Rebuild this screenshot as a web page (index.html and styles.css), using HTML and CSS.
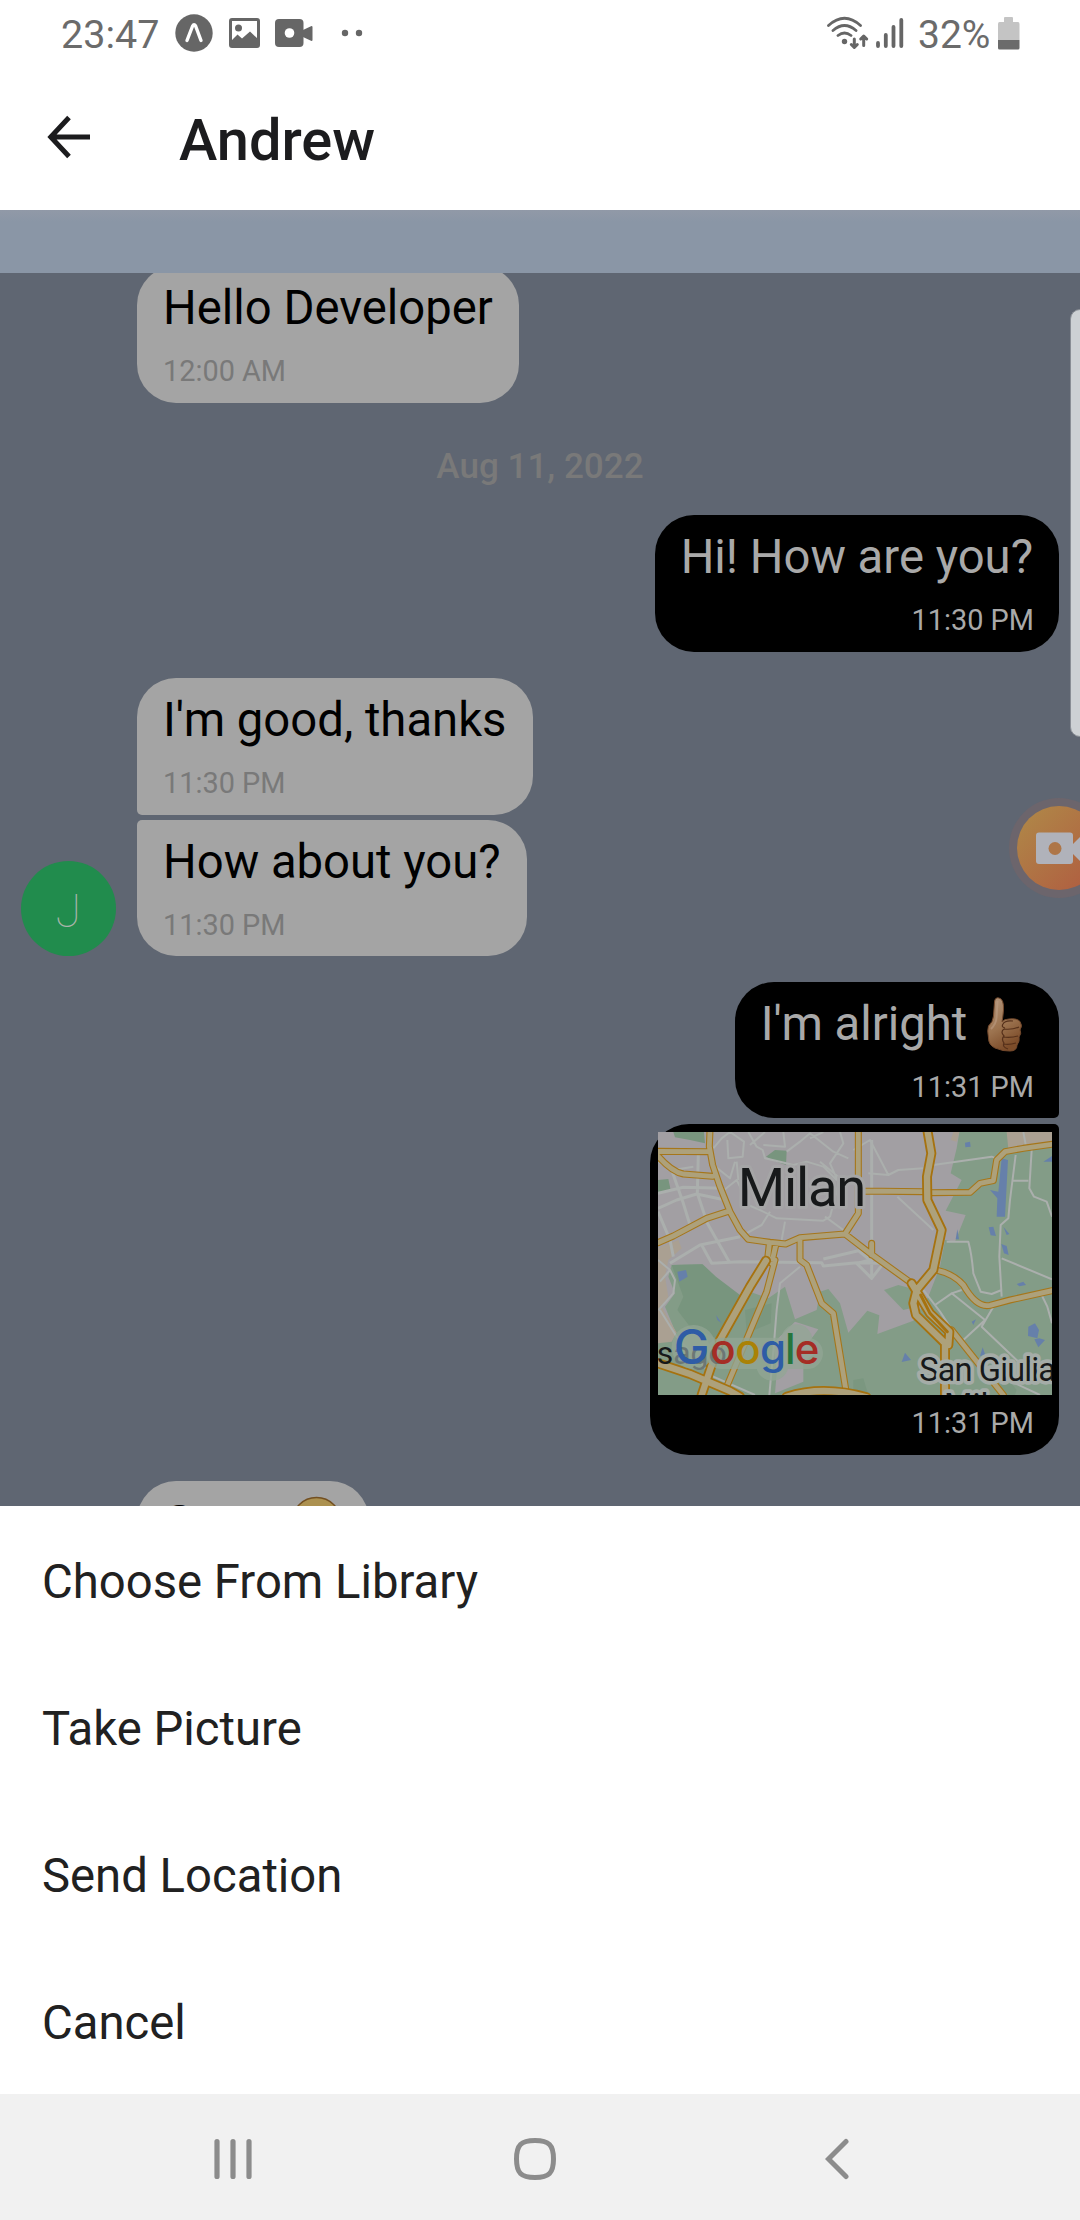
FILE: index.html
```html
<!DOCTYPE html>
<html lang="en">
<head>
<meta charset="utf-8">
<title>Andrew</title>
<link rel="stylesheet" href="styles.css">
</head>
<body>
<div class="screen">
  <div class="status">
    <span class="status-text clock">23:47</span>
    <svg class="ic-app" width="38" height="38" viewBox="0 0 38 38"><circle cx="19" cy="19" r="18.7" fill="#666"/><path d="M12 26.5 17.6 12Q19 9.500 20.600 12L26 26.500" fill="none" stroke="#fff" stroke-width="3.400" stroke-linecap="round" stroke-linejoin="round"/></svg>
    <svg class="ic-photo" width="31" height="30" viewBox="0 0 31 30"><rect x="1.500" y="1.500" width="28" height="27" rx="1.500" fill="none" stroke="#666" stroke-width="3"/><circle cx="9.500" cy="10" r="3.500" fill="#666"/><path d="M2 23 8.500 16.500 13 20.500 21 13.500 29 21V28H2Z" fill="#666"/></svg>
    <svg class="ic-video" width="38" height="28" viewBox="0 0 38 28"><rect width="28.500" height="28" rx="4" fill="#666"/><path d="M28 11 36.500 7Q37.500 7 37.500 8V21Q37.500 22 36.500 22L28 18Z" fill="#666"/><circle cx="14.500" cy="14" r="4.800" fill="#fff"/></svg>
    <svg class="ic-dots" width="22" height="8" viewBox="0 0 22 8"><circle cx="4" cy="4" r="3.200" fill="#666"/><circle cx="18" cy="4" r="3.200" fill="#666"/></svg>
    <svg class="ic-wifi" width="43" height="34" viewBox="0 0 43 34"><g fill="none" stroke="#666" stroke-width="2.800" stroke-linecap="round" stroke-linejoin="round"><path d="M2.500 9.500Q18.500-5 34.500 9.500M7 14.500Q18.500 4.500 30 14.500M12 19.500Q18.500 14.500 25 19.500"/><path d="M28.300 23V31M25.300 28.500 28.300 31.500 31.300 28.500M37.700 29.500V21M34.700 23 37.700 20 40.700 23" stroke-width="3"/></g><circle cx="18.500" cy="25.500" r="2.700" fill="#666"/></svg>
    <svg class="ic-signal" width="28" height="30" viewBox="0 0 28 30"><path d="M2 25V28M9.800 17V28M17.500 9V28M25.300 2V28" stroke="#666" stroke-width="3.800" stroke-linecap="round"/></svg>
    <span class="status-text battery">32%</span>
    <svg class="ic-battery" width="22" height="33" viewBox="0 0 22 33"><path d="M6 1Q6 0 7 0H14Q15 0 15 1V5H20Q21.500 5 21.500 7V23H0V7Q0 5 1.500 5H6Z" fill="#c4c4c4"/><path d="M0 23H21.500V31Q21.500 32.500 20 32.500H1.500Q0 32.500 0 31Z" fill="#6b6b6b"/></svg>
  </div>
  <header class="header">
    <svg width="44" height="44" viewBox="0 0 44 44"><path d="M22 2.500 3.800 22 22 41.500M4 22H43" fill="none" stroke="#1c1c1e" stroke-width="5"/></svg>
    <h1>Andrew</h1>
  </header>
  <div class="band"></div>
  <main class="chat">
    <div class="bubble in hello"><p>Hello Developer</p><time>12:00 AM</time></div>
    <div class="date">Aug 11, 2022</div>
    <div class="bubble out"><p>Hi! How are you?</p><time>11:30 PM</time></div>
    <div class="group">
      <div class="avatar">J</div>
      <div class="stack">
        <div class="bubble in first"><p>I'm good, thanks</p><time>11:30 PM</time></div>
        <div class="bubble in last"><p>How about you?</p><time>11:30 PM</time></div>
      </div>
    </div>
    <div class="bubble out first"><p>I'm alright <svg class="emoji" width="54" height="56" viewBox="0 0 54 56"><defs><linearGradient id="skin" x1="0" y1="0" x2=".4" y2="1"><stop offset="0" stop-color="#b3977e"/><stop offset=".6" stop-color="#9c734f"/><stop offset="1" stop-color="#7d4d2a"/></linearGradient></defs><path d="M20 2Q16 1 15.500 6L14.500 20Q14 26 9.500 30Q8 34 9.500 42Q9.500 49 16 52L24 54.500L31 55Q38 55 38 49Q41 45 40 41Q43 37 41 34Q44 30 41 25.500Q38 22 30 23Q25 23 23 26Q24 20 24.500 14Q25 3 20 2Z" fill="url(#skin)" stroke="#74492c"/><path d="M26 32Q22 31 24 28Q26 24 34 25M25 33Q33 34 40 31M24 41Q32 42 39 40M25 48Q30 49 37 47M25 33Q21 36 25 40Q22 43 25 47Q23 51 29 53" fill="none" stroke="#56301a" stroke-width="1.200"/><path d="M18.500 5 17.500 22Q17 28 12 33" fill="none" stroke="#bd9d84" stroke-width="2" opacity=".6"/></svg></p><time>11:31 PM</time></div>
    <div class="bubble out map-bubble">
      <svg class="map" width="394" height="263" viewBox="54 66 1182 789">
        <rect x="54" y="66" width="1182" height="789" fill="#a29fa3"/>
        <g fill="#839c87">
          <path d="M95 465 185 463 235 510 300 560 315 540 385 565 435 530 465 628 530 600 540 545 565 537 600 580 625 668 682 602 718 616 712 672 820 632 865 560 900 470 915 390 945 395 977 315 917 302 965 210 932 190 950 115 958 66H1236V855H54V700L108 670 75 590 105 550 85 500Z"/>
          <path d="M732 540 775 525 800 532 828 540 830 590 790 600Z"/>
        </g>
        <path d="M95 465 188 463 228 500 300 555 310 590 240 690 150 650 112 600 130 560Z M100 66H192L195 100 150 90 105 82ZM378 140 405 120 440 122 438 165 410 155ZM54 210 85 207 92 240 54 247Z" fill="#78957e"/>
        <path d="M315 600 395 580 392 640 320 670ZM640 810 670 805 685 855H640ZM1075 855 1090 790 1130 840 1125 855Z" fill="#7b9780"/>
        <path d="M1100 66H1236V95L1105 118ZM940 66H958L950 95 932 90ZM54 415 115 390 125 415 85 450 75 500 85 560 65 590 110 668 95 695 54 700Z" fill="#aaa092"/>
        <path d="M465 635 535 658 500 705 540 720 490 755 490 815 405 850 410 790 400 700Z" fill="#a29fa3"/>
        <g fill="#6680aa">
          <path d="M1085 145 1104 150 1095 320H1070L1072 265 1050 240 1075 245ZM975 98 990 95 992 110 976 112ZM1210 155 1236 138V155ZM1046 352 1060 350 1068 378 1052 376ZM1090 350 1108 372 1100 375ZM1084 402 1100 408 1106 435 1092 430ZM952 358 947 388 957 388ZM1130 522 1150 515 1158 525 1138 529ZM1165 650 1185 640 1197 660 1192 685 1164 678ZM1183 688 1198 685 1215 690 1195 712ZM795 728 813 750 785 756ZM995 635 1008 628 1000 645ZM1028 712 1036 735 1020 738ZM112 485 138 480 143 500 118 515ZM228 615 245 640 232 630Z"/>
        </g>
        <g fill="none" stroke="#abafad" stroke-width="6" stroke-linejoin="round">
          <path d="M54 295 110 270 170 252 245 268M175 130 172 250 202 340 270 460M95 180 130 280 150 345M54 250 130 232 250 235M54 305 90 390 100 440M90 460 180 405 300 380M185 405 215 460 300 455 545 458 550 468 650 458 725 460M550 447 655 422 690 450 650 460 695 505 730 460M695 90V500" stroke-width="9"/>
          <path d="M220 115 245 85 270 66 312 95 308 140 265 145 262 90M220 165 270 205 285 155M325 66 350 110 368 120 375 145 420 155 460 165 500 155 550 170 590 210M330 105 375 66M430 66 435 110 370 105M440 125 480 95 510 70 580 125 625 145M510 85 550 66M600 66 610 100 570 160 610 250M640 120 690 90 745 195M685 190 745 195 775 180 850 175M240 250 290 210 330 290M290 155 295 210M54 155 100 180 160 170M300 275 360 300 410 325 550 332 570 320M390 305 365 345 310 375M435 335 425 390M555 320 610 360M540 155 600 205 570 320"/>
          <path d="M772 260 880 360M880 165 1055 140 1070 145M920 395H985Q995 430 1000 490L1022 545 1055 552 1085 540M1150 66 1160 120M1127 135 1110 270 1105 325 1082 345 1078 440 1085 560M1120 212H1165M1175 120 1168 235 1182 260 1220 275 1236 320M1085 445 1236 508M835 520 900 605 935 658M885 585 935 550 1035 630 970 690M935 550 965 540M1060 590 1025 650 1140 760M1205 555 1222 590 1236 640M1040 780 1200 855M480 470 420 520 410 600 402 700 388 855M60 515 90 480 105 510 100 550 55 600M54 450 90 480M60 600 110 680 220 800M220 800 345 855"/>
        </g>
        <g fill="none" stroke-linejoin="round" stroke-linecap="round">
          <path d="M210 60 208 110 218 165 240 230 270 305 300 360 325 388 390 397 437 402 480 383 615 372 655 310V60M54 124 205 125M54 138 Q95 185 130 192L218 199M54 398 100 378 200 325 262 305M388 402 383 445 405 450 380 545 260 830M408 402 395 460M480 390V450L500 465 545 580 580 610 620 855M615 372 690 430 815 520M695 400V435M660 243 850 245M870 248 990 247 1020 220 1060 212 1070 150 1095 125 1150 115 1236 103M895 482Q940 492 970 525Q1010 595 1050 586L1110 570 1236 542M935 660 1090 855M915 710 920 855" stroke="#a6761a" stroke-width="21"/>
          <path d="M210 60 208 110 218 165 240 230 270 305 300 360 325 388 390 397 437 402 480 383 615 372 655 310V60M54 124 205 125M54 138 Q95 185 130 192L218 199M54 398 100 378 200 325 262 305M388 402 383 445 405 450 380 545 260 830M408 402 395 460M480 390V450L500 465 545 580 580 610 620 855M615 372 690 430 815 520M695 400V435M660 243 850 245M870 248 990 247 1020 220 1060 212 1070 150 1095 125 1150 115 1236 103M895 482Q940 492 970 525Q1010 595 1050 586L1110 570 1236 542M935 660 1090 855M915 710 920 855" stroke="#ada17b" stroke-width="14.500"/>
          <path d="M862 60 874 130 861 200 862 270 905 360 880 480 830 540 820 580 828 615 915 700V855M815 520 870 610 928 665 925 705M378 452 330 530 240 690 185 855M54 760 150 792 270 843 300 860M440 860Q550 825 680 862" stroke="#a6720f" stroke-width="30"/>
          <path d="M862 60 874 130 861 200 862 270 905 360 880 480 830 540 820 580 828 615 915 700V855M815 520 870 610 928 665 925 705M378 452 330 530 240 690 185 855M54 760 150 792 270 843 300 860M440 860Q550 825 680 862" stroke="#ada17b" stroke-width="19"/>
          <path d="M842 555 870 610 922 665" stroke="#a6720f" stroke-width="9"/>
        </g>
        <g class="map-label" stroke="#a5aca7" stroke-linejoin="round" paint-order="stroke">
          <text x="293" y="288" font-size="163" textLength="386" stroke="#a5a5a6" stroke-width="18">Milan</text>
          <text x="838" y="812" font-size="98" textLength="410" stroke-width="22">San Giulia</text>
          <text x="912" y="922" font-size="98" stroke-width="22">Milanese</text>
        </g>
        <path d="M161 711H160M245 730H470V690M398 765H396M470 730H502" fill="none" stroke="#92a594" stroke-width="94" stroke-linecap="round" stroke-linejoin="round" opacity=".75"/>
        <circle cx="161" cy="711" r="66" fill="#92a594" opacity=".75"/>
        <text class="map-label" x="50" y="762" font-size="96">s<tspan fill="#6c7775">ago</tspan></text>
        <g class="brand">
          <text x="101" y="763" font-size="143" fill="#2e5ca6">G</text>
          <text y="762" font-size="126"><tspan x="211" fill="#a52d25">o</tspan><tspan x="286" fill="#aa8207">o</tspan><tspan x="360" fill="#2e5ca6">g</tspan><tspan x="435" fill="#25763c">l</tspan><tspan x="464" fill="#a52d25">e</tspan></text>
        </g>
      </svg>
      <time>11:31 PM</time>
    </div>
    <div class="bubble in great"><p>Great <svg class="emoji" width="54" height="56" viewBox="0 0 54 56"><circle cx="27.500" cy="27" r="24.500" fill="#ac9150" stroke="#735022" stroke-width="1.500"/></svg></p><time>11:31 PM</time></div>
  </main>
  <div class="sheet">
    <div class="option">Choose From Library</div>
    <div class="option">Take Picture</div>
    <div class="option">Send Location</div>
    <div class="option">Cancel</div>
  </div>
  <nav class="nav">
    <svg width="38" height="42" viewBox="0 0 38 42"><path d="M3 3.500V38.500M19 3.500V38.500M35 3.500V38.500" stroke="#8c8c8c" stroke-width="5.200" stroke-linecap="round"/></svg>
    <svg width="42" height="42" viewBox="0 0 42 42"><path d="M21 2.500C35 2.500 39.500 7 39.500 21S35 39.500 21 39.500 2.500 35 2.500 21 7 2.500 21 2.500Z" fill="none" stroke="#8c8c8c" stroke-width="5"/></svg>
    <svg width="24" height="42" viewBox="0 0 24 42"><path d="M21 3.500 3.500 21 21 38.500" fill="none" stroke="#8c8c8c" stroke-width="5" stroke-linecap="round"/></svg>
  </nav>
  <div class="edge-handle"></div>
  <svg class="recorder" width="71" height="100" viewBox="0 0 71 100"><defs><linearGradient id="rec" x1="0" y1="0" x2="1" y2="1"><stop offset="0" stop-color="#af8a48"/><stop offset="1" stop-color="#b05a40"/></linearGradient></defs><circle cx="50" cy="50" r="50" fill="#6c656c"/><circle cx="50" cy="50" r="42" fill="url(#rec)"/><rect x="27" y="34.500" width="37" height="31.500" rx="3" fill="#b0b2ba"/><path d="M64 46 74 36V66L64 56Z" fill="#b0b2ba"/><circle cx="46" cy="50.500" r="6.500" fill="#ae7648"/></svg>
</div>
</body>
</html>
```
FILE: styles.css
```css
* { box-sizing: border-box; }
body { margin: 0; font-family: Roboto, "Liberation Sans", sans-serif; }
svg { display: block; flex: none; }
.screen { position: relative; width: 1080px; height: 2220px; overflow: hidden; background: #fff; display: flex; flex-direction: column; }

.status { height: 66px; padding: 0 60px 0 61px; display: flex; align-items: center; flex: none; }
.status-text { font-size: 39.5px; line-height: 48px; color: #6b6b6b; padding-top: 3px; }
.clock { width: 114px; }
.ic-photo { margin-left: 16px; }
.ic-video { margin-left: 15px; }
.ic-dots { margin-left: 28px; }
.ic-wifi { margin-left: auto; }
.ic-signal { margin-left: 7px; }
.battery { margin-left: 14px; width: 80px; font-size: 39px; }

.header { height: 144px; padding: 0 0 0 47px; display: flex; align-items: center; gap: 88px; flex: none; }
.header svg { margin-top: -3px; }
h1 { margin: 3px 0 0; font-size: 57.75px; line-height: 68px; font-weight: 500; color: #1c1c1e; }

.band { height: 63px; flex: none; background: linear-gradient(#9199a7, #8a96a6 12px); }
.chat { height: 1233px; flex: none; overflow: hidden; background: #5f6672; padding: 0 21px; display: flex; flex-direction: column; }

.bubble { width: max-content; flex: none; padding: 15px 26px 15px; border-radius: 39px; display: flex; flex-direction: column; gap: 18px; }
.bubble p { margin: 0; font-size: 47.25px; line-height: 55px; height: 55px; display: flex; white-space: pre; }
.bubble time { font-size: 28.875px; line-height: 34px; }
.in { margin-left: 116px; background: #a4a4a4; color: #000; }
.in time { color: #797979; }
.out { align-self: flex-end; background: #000; color: #a9a9a9; }
.out time { align-self: flex-end; margin-right: -1px; }
.hello { margin-top: -7px; }
.date { align-self: center; margin: 43px 0 29px; font-size: 35.1px; line-height: 40px; font-weight: 500; color: #797979; }

.group { display: flex; align-items: flex-end; gap: 21px; margin-top: 26px; }
.group .in { margin-left: 0; }
.avatar { width: 95px; height: 95px; border-radius: 50%; background: #218c4d; color: #a9b5aa; display: flex; align-items: center; justify-content: center; padding-top: 3px; font-size: 47px; font-weight: 100; }
.stack { display: flex; flex-direction: column; gap: 5px; }
.in.first { border-bottom-left-radius: 5px; }
.in.last { border-top-left-radius: 5px; height: 136px; }
.out.first { border-bottom-right-radius: 5px; margin-top: 26px; height: 136px; }
.map-bubble { width: 409px; height: 331px; margin-top: 6px; padding: 8px 0 0 8px; border-top-right-radius: 5px; gap: 11px; }
.map-bubble time { margin-right: 25px; }
.map-label { font-family: Roboto, sans-serif; fill: #17191a; }
.brand { font-family: Inter, sans-serif; font-weight: 500; }
.emoji { margin-top: -1px; }
.great { margin-top: 26px; }

.sheet { height: 588px; flex: none; display: grid; grid-template-rows: repeat(4, 147px); background: #fff; padding-left: 42px; }
.option { display: flex; align-items: center; padding-top: 5px; font-size: 47.25px; color: #212121; }
.nav { height: 126px; flex: none; background: #f1f1f1; display: grid; grid-template-columns: repeat(3, 302px); padding-left: 82px; align-items: center; justify-items: center; padding-top: 4px; }

.edge-handle { position: absolute; left: 1070px; top: 309px; width: 20px; height: 428px; border: 1px solid #898e95; border-radius: 12px; background: #cdd1d4; }
.recorder { position: absolute; left: 1009px; top: 798px; }
```
